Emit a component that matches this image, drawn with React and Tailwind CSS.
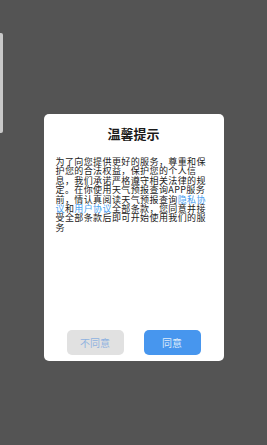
export default function App() {
  return (
    <div
      className="relative h-[445px] w-[267px] overflow-hidden bg-[#545454] pt-[114px]"
      style={{ fontFamily: '"Noto Sans CJK SC", "Noto Sans", sans-serif' }}
    >
      {/* drawer edge peeking in from the left */}
      <div className="absolute left-0 top-[33px] h-[100px] w-[3px] rounded-r-[2px] bg-[#c9c9c9]" />

      <div className="mx-auto flex h-[247px] w-[180px] flex-col rounded-[5px] bg-white">
        <div className="pt-[13px] text-center text-[13px] font-bold leading-[14px] text-[#1a1a1a]">
          温馨提示
        </div>
        <p className="mt-[16px] w-[166px] pl-[12px] text-[9px] leading-[9.4px] tracking-[0.4px] text-[#222] [text-spacing-trim:space-all]">
          为了向您提供更好的服务，尊重和保护您的合法权益，保护您的个人信息，我们承诺严格遵守相关法律的规定。在你使用天气预报查询APP服务前，情认真阅读天气预报查询
          <span className="text-[#4a9ff0]">隐私协议</span>和
          <span className="text-[#4a9ff0]">用户协议</span>
          全部条款，您同意并接受全部条款后即可开始使用我们的服务
        </p>
        <div className="mt-auto mb-[6px] flex justify-center gap-[20px]">
          <button className="h-[25px] w-[57px] rounded-[5px] bg-[#e1e1e1] text-[10px] text-[#8fb2e0]">
            不同意
          </button>
          <button className="h-[25px] w-[57px] rounded-[5px] bg-[#4796ee] text-[10px] text-[#dfecfb]">
            同意
          </button>
        </div>
      </div>
    </div>
  );
}
